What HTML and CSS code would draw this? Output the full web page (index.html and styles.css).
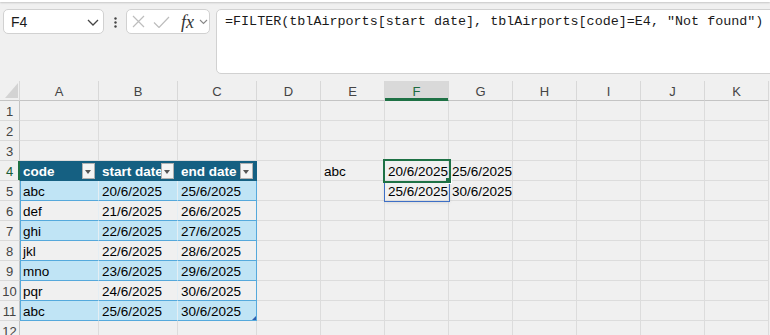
FILE: index.html
```html
<!DOCTYPE html>
<html>
<head>
  <title>Book1 - Excel</title>
  <meta charset="UTF-8">
  <link rel="stylesheet" href="styles.css">
</head>
<body>
  <div class="ribbon-edge"></div>

  <div class="formula-row">
    <div class="name-box">
      <span>F4</span>
      <svg width="12" height="7" viewBox="0 0 12 7"><path d="M1 1l5 5 5-5" fill="none" stroke="#444" stroke-width="1.3"/></svg>
    </div>
    <div class="dots">
      <svg width="3" height="11" viewBox="0 0 3 11"><circle cx="1.5" cy="1.5" r="1.2"/><circle cx="1.5" cy="5.5" r="1.2"/><circle cx="1.5" cy="9.5" r="1.2"/></svg>
    </div>
    <div class="fx-box">
      <svg class="ic-x" width="13" height="13" viewBox="0 0 13 13"><path d="M1 1l11 11M12 1L1 12" fill="none" stroke="#bdbdbd" stroke-width="1.2"/></svg>
      <svg class="ic-ok" width="17" height="12" viewBox="0 0 17 12"><path d="M1 6.5l5 5L16 1" fill="none" stroke="#bdbdbd" stroke-width="1.2"/></svg>
      <span class="fx">fx</span>
      <svg class="ic-more" width="9" height="6" viewBox="0 0 9 6"><path d="M1 1l3.5 3.5L8 1" fill="none" stroke="#888" stroke-width="1.1"/></svg>
    </div>
    <div class="formula">=FILTER(tblAirports[start date], tblAirports[code]=E4, "Not found")</div>
  </div>

  <table class="sheet">
    <colgroup>
      <col class="c-rh">
      <col class="c-wide"><col class="c-wide"><col class="c-wide">
      <col class="c-std"><col class="c-std"><col class="c-std"><col class="c-std">
      <col class="c-std"><col class="c-std"><col class="c-std"><col class="c-std">
    </colgroup>
    <tr class="col-heads">
      <th class="corner"><svg width="13" height="15" viewBox="0 0 13 15"><polygon points="0,15 13,15 13,0" fill="#d3d3d3"/></svg></th>
      <th>A</th><th>B</th><th>C</th><th>D</th><th>E</th><th class="cur">F</th><th>G</th><th>H</th><th>I</th><th>J</th><th>K</th>
    </tr>
    <tr><td class="rh">1</td><td></td><td></td><td></td><td></td><td></td><td></td><td></td><td></td><td></td><td></td><td></td></tr>
    <tr><td class="rh">2</td><td></td><td></td><td></td><td></td><td></td><td></td><td></td><td></td><td></td><td></td><td></td></tr>
    <tr><td class="rh">3</td><td></td><td></td><td></td><td></td><td></td><td></td><td></td><td></td><td></td><td></td><td></td></tr>
    <tr>
      <td class="rh cur">4</td>
      <td class="thd">code<span class="filter"></span></td>
      <td class="thd">start date<span class="filter"></span></td>
      <td class="thd">end date<span class="filter"></span></td>
      <td></td><td>abc</td><td class="sel">20/6/2025</td><td>25/6/2025</td><td></td><td></td><td></td><td></td>
    </tr>
    <tr>
      <td class="rh">5</td>
      <td class="tb band first">abc</td><td class="tb band">20/6/2025</td><td class="tb band last">25/6/2025</td>
      <td></td><td></td><td class="spill">25/6/2025</td><td>30/6/2025</td><td></td><td></td><td></td><td></td>
    </tr>
    <tr>
      <td class="rh">6</td>
      <td class="tb first">def</td><td class="tb">21/6/2025</td><td class="tb last">26/6/2025</td>
      <td></td><td></td><td></td><td></td><td></td><td></td><td></td><td></td>
    </tr>
    <tr>
      <td class="rh">7</td>
      <td class="tb band first">ghi</td><td class="tb band">22/6/2025</td><td class="tb band last">27/6/2025</td>
      <td></td><td></td><td></td><td></td><td></td><td></td><td></td><td></td>
    </tr>
    <tr>
      <td class="rh">8</td>
      <td class="tb first">jkl</td><td class="tb">22/6/2025</td><td class="tb last">28/6/2025</td>
      <td></td><td></td><td></td><td></td><td></td><td></td><td></td><td></td>
    </tr>
    <tr>
      <td class="rh">9</td>
      <td class="tb band first">mno</td><td class="tb band">23/6/2025</td><td class="tb band last">29/6/2025</td>
      <td></td><td></td><td></td><td></td><td></td><td></td><td></td><td></td>
    </tr>
    <tr>
      <td class="rh">10</td>
      <td class="tb first">pqr</td><td class="tb">24/6/2025</td><td class="tb last">30/6/2025</td>
      <td></td><td></td><td></td><td></td><td></td><td></td><td></td><td></td>
    </tr>
    <tr>
      <td class="rh">11</td>
      <td class="tb band first">abc</td><td class="tb band">25/6/2025</td><td class="tb band last end">30/6/2025</td>
      <td></td><td></td><td></td><td></td><td></td><td></td><td></td><td></td>
    </tr>
    <tr><td class="rh">12</td><td></td><td></td><td></td><td></td><td></td><td></td><td></td><td></td><td></td><td></td><td></td></tr>
  </table>
</body>
</html>
```

FILE: styles.css
```css
body {
  margin: 0;
  width: 770px;
  height: 335px;
  overflow: hidden;
  background-color: #f0f0f0;
  font-family: "Liberation Sans", Arial, sans-serif;
  color: #000;
}
.ribbon-edge {
  height: 2px;
  background-color: #fff;
  box-shadow: 0 1px 2px rgba(0,0,0,0.18);
}

/* formula bar */
.formula-row {
  display: flex;
  align-items: flex-start;
  padding: 7px 0 0 3px;
  margin-bottom: 7px;
}
.name-box, .fx-box, .formula {
  box-sizing: border-box;
  background-color: #fff;
  border: 1px solid #d1d1d1;
  border-radius: 5px;
}
.name-box {
  width: 101px;
  height: 25px;
  display: flex;
  align-items: center;
  justify-content: space-between;
  padding: 1px 4px 0 7px;
  font-size: 14px;
  color: #1a1a1a;
}
.dots {
  width: 22px;
  display: flex;
  justify-content: center;
  padding-top: 8px;
  fill: #444;
}
.fx-box {
  width: 84px;
  height: 25px;
  display: flex;
  align-items: center;
  padding-left: 5px;
}
.ic-ok {
  margin-left: 8px;
}
.fx {
  margin-left: 11px;
  font-family: "Liberation Serif", serif;
  font-style: italic;
  font-size: 18px;
  line-height: 18px;
  color: #333;
}
.ic-more {
  margin-left: 5px;
}
.formula {
  flex: 1;
  height: 65px;
  margin: 0 -20px 0 6px;
  padding: 3px 8px;
  font-family: "Liberation Mono", monospace;
  font-size: 13.4px;
  line-height: 18px;
  white-space: nowrap;
  color: #1a1a1a;
}

/* grid */
.sheet {
  border-collapse: separate;
  border-spacing: 0;
  table-layout: fixed;
  width: 769px;
}
.c-rh { width: 20px; }
.c-wide { width: 79px; }
.c-std { width: 64px; }
.sheet tr {
  height: 20px;
}
.sheet td, .sheet th {
  box-sizing: border-box;
  padding: 2px 3px 0;
  line-height: 17px;
  font-size: 13.5px;
  font-weight: normal;
  text-align: left;
  vertical-align: top;
  white-space: nowrap;
  overflow: visible;
  border-right: 1px solid #dcdcdc;
  border-bottom: 1px solid #dcdcdc;
}
.col-heads th {
  background-color: #f0f0f0;
  text-align: center;
  font-size: 13px;
  color: #444;
  border-right-color: #d8d8d8;
  border-bottom-color: #c4c4c4;
}
.col-heads th.corner {
  padding: 2px 0 0 5px;
  text-align: left;
  line-height: 0;
}
.col-heads th.cur {
  background-color: #d9d9d9;
  color: #1e6b41;
  border-bottom-color: #1e7145;
  box-shadow: inset 0 -2px 0 #1e7145;
}
.sheet td.rh {
  padding: 2px 0 0;
  text-align: center;
  font-size: 13px;
  color: #444;
  background-color: #f0f0f0;
  border-right-color: #c4c4c4;
  border-bottom-color: #dadada;
}
.sheet td.rh.cur {
  color: #185c37;
  border-right-color: #1e7145;
  box-shadow: inset -1px 0 0 #1e7145;
}

/* table tblAirports */
.sheet td.thd {
  position: relative;
  background-color: #156082;
  color: #fff;
  font-weight: bold;
  border-right-color: #156082;
  border-bottom-color: #156082;
}
.filter {
  position: absolute;
  right: 3px;
  top: 2px;
  width: 13px;
  height: 16px;
  box-sizing: border-box;
  border: 1px solid #b0b0b0;
  background-color: #f4f4f4;
}
.filter::after {
  content: "";
  position: absolute;
  left: 2px;
  top: 6px;
  border-left: 3.5px solid transparent;
  border-right: 3.5px solid transparent;
  border-top: 4px solid #555;
}
.sheet td.tb {
  border-bottom-color: #55a9dc;
  border-right-color: #e4eef4;
}
.sheet td.band {
  background-color: #c0e4f5;
}
.sheet td.first {
  box-shadow: inset 1px 0 0 #55a9dc;
}
.sheet td.last {
  border-right-color: #55a9dc;
}
.sheet td.end {
  position: relative;
}
.sheet td.end::after {
  content: "";
  position: absolute;
  right: 0;
  bottom: 0;
  border-left: 4px solid transparent;
  border-bottom: 4px solid #2f5fae;
}

/* selection */
.sheet td.sel {
  position: relative;
  z-index: 2;
  outline: 2px solid #1e7145;
}
.sheet td.sel::after {
  content: "";
  position: absolute;
  right: -4px;
  bottom: -4px;
  width: 5px;
  height: 5px;
  background-color: #1e7145;
  border: 1px solid #fff;
  border-width: 0 1px 1px 0;
}
.sheet td.spill {
  position: relative;
  z-index: 1;
  outline: 1px solid #3d6fc6;
  box-shadow: 0 1px 4px rgba(0,0,0,0.16);
}
```
